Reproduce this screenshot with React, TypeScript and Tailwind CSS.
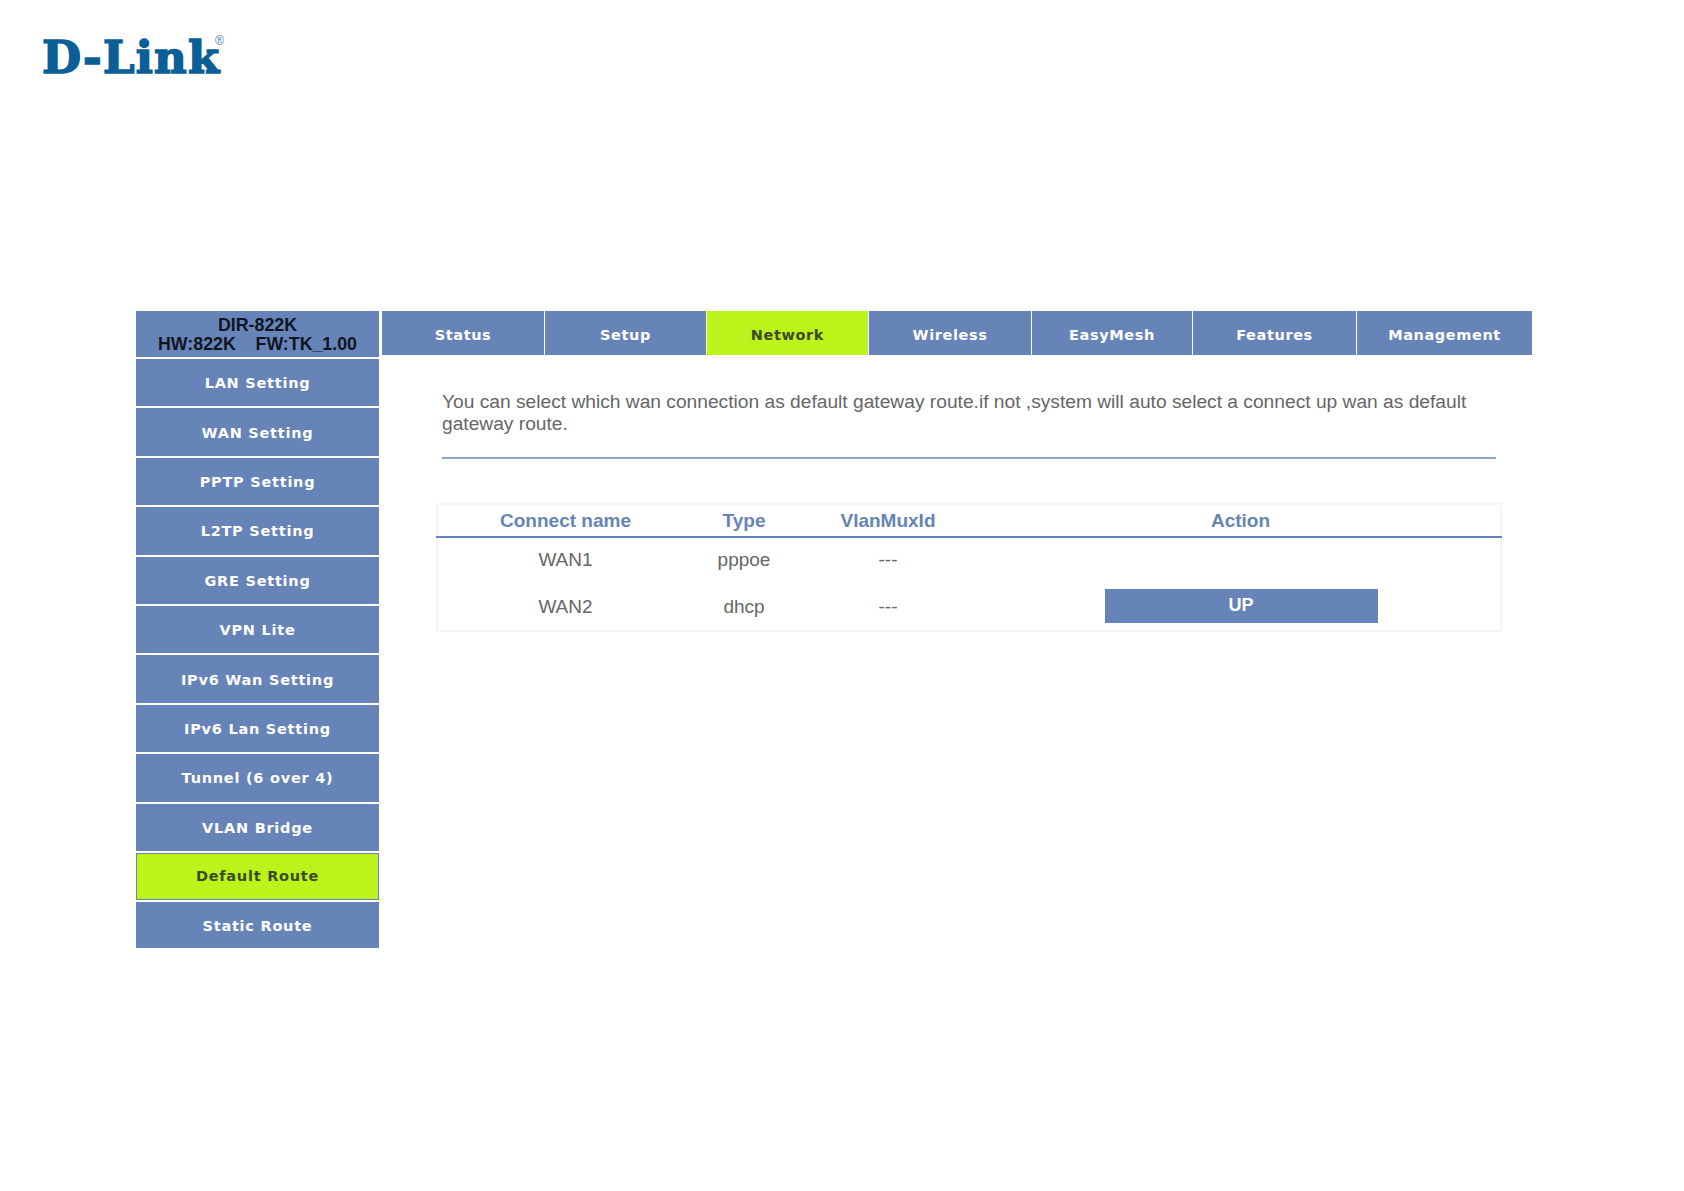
const sideItems = [
  "LAN Setting",
  "WAN Setting",
  "PPTP Setting",
  "L2TP Setting",
  "GRE Setting",
  "VPN Lite",
  "IPv6 Wan Setting",
  "IPv6 Lan Setting",
  "Tunnel (6 over 4)",
  "VLAN Bridge",
  "Default Route",
  "Static Route",
];

const tabs = [
  { name: "Status", width: "w-[162px]" },
  { name: "Setup", width: "w-[161px]" },
  { name: "Network", width: "w-[161px]" },
  { name: "Wireless", width: "w-[162px]" },
  { name: "EasyMesh", width: "w-[160px]" },
  { name: "Features", width: "w-[163px]" },
  { name: "Management", width: "w-[175px]" },
];

const rows = [
  { name: "WAN1", type: "pppoe", vlan: "---", up: false },
  { name: "WAN2", type: "dhcp", vlan: "---", up: true },
];

export default function App() {
  return (
    <div className="min-h-[1191px] bg-white font-['Liberation_Sans',sans-serif]">
      {/* logo */}
      <div className="h-[311px] pt-[29px] pl-[42px]">
        <div className="flex items-start font-['DejaVu_Serif',serif] text-[#0b5f96]">
          <span className="text-[45px] leading-[58px] font-bold tracking-[1.2px] [-webkit-text-stroke:1.6px_#0b5f96]">
            D-Link
          </span>
          <span className="text-[12px] leading-none mt-[6px] -ml-[7px] text-[#5f8db0]">®</span>
        </div>
      </div>

      <div className="flex pl-[136px]">
        {/* side menu */}
        <div className="w-[243px] flex flex-col gap-[2px] font-['DejaVu_Sans',sans-serif]">
          <div className="h-[46px] bg-[#6684b7] text-center text-[#11151f] font-['Liberation_Sans',sans-serif] font-semibold text-[17.8px] leading-[19px] pt-[5px]">
            <div>DIR-822K</div>
            <div className="whitespace-pre">HW:822K    FW:TK_1.00</div>
          </div>
          {sideItems.map((item) =>
            item === "Default Route" ? (
              <div
                key={item}
                className="h-[47.4px] pt-[1px] flex items-center justify-center bg-[#bbf31b] border border-[#6684b7] text-[#3c4a26] text-[14.5px] font-bold tracking-[0.75px]"
              >
                {item}
              </div>
            ) : (
              <div
                key={item}
                className={`${item === "Static Route" ? "h-[46px]" : "h-[47.4px]"} pt-[3px] flex items-center justify-center bg-[#6684b7] text-white text-[14.5px] font-bold tracking-[0.75px]`}
              >
                {item}
              </div>
            )
          )}
        </div>

        <div className="ml-[3px] w-[1150px]">
          {/* top tabs */}
          <div className="flex gap-px font-['DejaVu_Sans',sans-serif]">
            {tabs.map((tab) => (
              <div
                key={tab.name}
                className={`${tab.width} h-[44px] pt-[5px] flex items-center justify-center text-[14.5px] font-bold tracking-[0.6px] ${
                  tab.name === "Network"
                    ? "bg-[#bbf31b] text-[#3c4a26]"
                    : "bg-[#6684b7] text-white"
                }`}
              >
                {tab.name}
              </div>
            ))}
          </div>

          <div className="pt-[36px] pl-[60px] w-[1114px]">
            <p className="text-[19.2px] leading-[22px] text-[#666666]">
              You can select which wan connection as default gateway route.if not ,system will auto
              select a connect up wan as default gateway route.
            </p>
            <div className="mt-[22px] h-[2px] bg-[#8fa5c9]"></div>
          </div>

          {/* route table */}
          <table className="ml-[54px] mt-[44px] w-[1066px] table-fixed border-collapse border-2 border-[#f5f6f8] text-center text-[19px]">
            <thead>
              <tr className="h-[33px] border-b-2 border-[#6684b7] text-[#6684b7] font-bold">
                <th className="w-[256px] pt-[2px]">Connect name</th>
                <th className="w-[102px] pt-[2px]">Type</th>
                <th className="w-[186px] pt-[2px]">VlanMuxId</th>
                <th className="pt-[2px]">Action</th>
              </tr>
            </thead>
            <tbody className="text-[#666666]">
              {rows.map((row) => (
                <tr key={row.name} className={row.up ? "h-[48px]" : "h-[46px]"}>
                  <td className={row.up ? "pt-[2px]" : ""}>{row.name}</td>
                  <td className={row.up ? "pt-[2px]" : ""}>{row.type}</td>
                  <td className={row.up ? "pt-[2px]" : ""}>{row.vlan}</td>
                  <td className={row.up ? "pb-[2px] pl-[1px]" : ""}>
                    {row.up && (
                      <button className="w-[273px] h-[34px] bg-[#6684b7] text-white font-bold text-[18px]">
                        UP
                      </button>
                    )}
                  </td>
                </tr>
              ))}
            </tbody>
          </table>
        </div>
      </div>
    </div>
  );
}
